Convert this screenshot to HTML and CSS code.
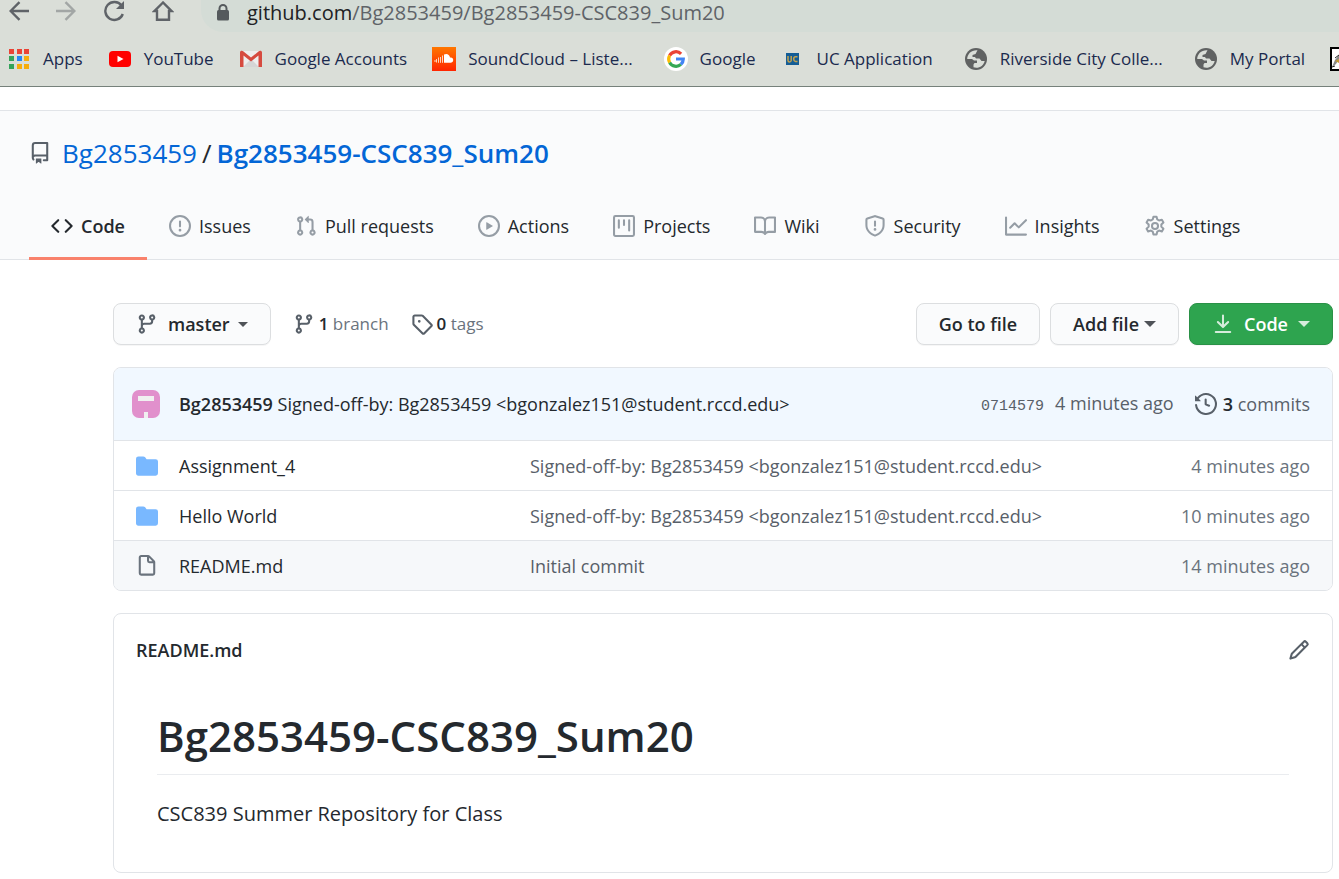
FILE: index.html
```html
<!DOCTYPE html>
<html lang="en">
<head>
<meta charset="utf-8">
<title>Bg2853459/Bg2853459-CSC839_Sum20</title>
<link rel="stylesheet" href="styles.css">
</head>
<body>
<svg class="defs" aria-hidden="true">
  <symbol id="branch" viewBox="0 0 16 16"><path fill-rule="evenodd" d="M11.75 2.5a.75.75 0 100 1.5.75.75 0 000-1.5zm-2.25.75a2.25 2.25 0 113 2.122V6A2.5 2.5 0 0110 8.500H6a1 1 0 00-1 1v1.128a2.251 2.251 0 11-1.500 0V5.372a2.250 2.250 0 111.500 0v1.836A2.492 2.492 0 016 7h4a1 1 0 001-1v-.628A2.250 2.250 0 019.500 3.250zM4.250 12a.75.75 0 100 1.500.75.75 0 000-1.500zM3.500 3.250a.75.75 0 111.500 0 .75.75 0 01-1.500 0z"/></symbol>
  <symbol id="folder" viewBox="0 0 16 16"><path d="M1.750 1A1.750 1.750 0 000 2.750v10.500C0 14.216.784 15 1.750 15h12.500A1.750 1.750 0 0016 13.250v-8.500A1.750 1.750 0 0014.250 3h-6.500a.25.25 0 01-.2-.1l-.9-1.200c-.33-.44-.85-.7-1.400-.7h-3.500z"/></symbol>
  <symbol id="globe" viewBox="0 0 22 22"><circle cx="11" cy="11" r="11"/><path fill="#dadeD8" d="M12.500 2.300C6.500 1.800 2.300 6 2.200 11H7l2 1.500h3V15H9.500l-1 1.500v2.800c5 1.700 10-1.300 11.200-6.300h-3.200L14.500 10.500H11L10 9H7.500V7l3-1z"/></symbol>
</svg>

<header class="chrome">
  <div class="toolbar">
    <button aria-label="Back"><svg width="20" height="20" viewBox="0 0 20 20"><path class="line" d="M20 10H2M10.500 1.200L1.600 10l8.900 8.800"/></svg></button>
    <button class="off" aria-label="Forward"><svg width="20" height="20" viewBox="0 0 20 20"><path class="line" d="M0 10h18M9.500 1.200l8.900 8.800-8.900 8.800"/></svg></button>
    <button aria-label="Reload"><svg width="22" height="22" viewBox="0 0 22 22"><path class="line" d="M18.500 5.500A9 9 0 1 0 19.800 14"/><path fill="#5f6368" d="M21 1v8h-8z"/></svg></button>
    <button aria-label="Home"><svg width="22" height="20" viewBox="0 0 22 20"><path class="line" d="M11 1.500L2.500 10H5v8.700h12V10h2.500z"/></svg></button>
    <div class="address">
      <svg width="14" height="17" viewBox="0 0 14 17"><path class="lockarc" d="M3.500 7V4.500a3.500 3.500 0 017 0V7"/><rect x="1" y="6" width="12" height="10.500" rx="1.500" fill="#555a5d"/></svg>
      <span class="url"><span class="host">github.com</span>/Bg2853459/Bg2853459-CSC839_Sum20</span>
    </div>
  </div>
  <nav class="bookmarks" aria-label="Bookmarks">
    <a href="#"><svg viewBox="0 0 24 24"><g fill="#ea4335"><path d="M2 2h5v5H2zM10 2h5v5h-5zM17 2h5v5h-5z"/></g><path fill="#34a35a" d="M2 9h5v5H2zM2 17h5v5H2z"/><path fill="#2486f5" d="M10 9h5v5h-5z"/><path fill="#f6ad0c" d="M17 9h5v5h-5zM10 17h5v5h-5zM17 17h5v5h-5z"/></svg>Apps</a>
    <a href="#"><svg viewBox="0 0 24 24"><rect x="1" y="4" width="22" height="16" rx="4" fill="red"/><path fill="#fff" d="M9.500 8.700v6.600l6-3.300z"/></svg>YouTube</a>
    <a href="#"><svg viewBox="0 0 24 24"><path fill="#eee" d="M2 4h20v16H2z"/><path fill="#d5d5d5" d="M4 20l8-8 8 8z"/><path fill="#d64b40" d="M1 20V5.500C1 3.500 3.500 3.500 4.500 4.600L12 10.500l7.500-5.900C20.500 3.500 23 3.500 23 5.500V20h-3.500V8.500L12 14.500 4.500 8.500V20z"/></svg>Google Accounts</a>
    <a href="#"><svg viewBox="0 0 24 24"><defs><linearGradient id="sc" x2="0" y2="1"><stop stop-color="#f70"/><stop offset="1" stop-color="#ff2500"/></linearGradient></defs><path fill="url(#sc)" d="M0 0h24v24H0z"/><path fill="#fff" d="M12 7.500c3-1.500 5.500.2 6 3 2-.5 3.200.8 3.200 2.500S20 15.800 18.500 15.800H12z"/><path stroke="#ffd4bd" d="M10.500 8.500v7.300M8.500 10v5.800M6.500 10.500v5.300M4.500 12v3.500M3 13v2"/></svg>SoundCloud – Liste...</a>
    <a href="#" class="wide"><svg viewBox="0 0 24 24"><circle cx="12" cy="12" r="12" fill="#fff"/><g fill="none" stroke-width="3.200"><path stroke="#ea4335" d="M5.600 8.500A7.300 7.300 0 0 1 17.100 6.800"/><path stroke="#fbbc05" d="M5.600 15.500a7.300 7.300 0 0 1 0-7"/><path stroke="#34a853" d="M5.600 15.500A7.300 7.300 0 0 0 16.900 17.400"/><path stroke="#4285f4" d="M12 12h7.300a7.300 7.300 0 0 1-2.400 5.400"/></g></svg>Google</a>
    <a href="#"><svg viewBox="0 0 24 24"><path fill="#145d96" d="M5 6h13v12H5z"/><path fill="none" stroke="#c5a34f" stroke-width="1.500" d="M7 9v4.500q0 1.500 1.500 1.500t1.700-1.500V9M16.500 9.800h-2q-1.800 0-1.800 2.200t1.800 2.500h2"/></svg>UC Application</a>
    <a href="#" class="wide"><svg viewBox="-1 -1 24 24" fill="#606262"><use href="#globe" width="22" height="22"/></svg>Riverside City Colle...</a>
    <a href="#" class="wide"><svg viewBox="-1 -1 24 24" fill="#606262"><use href="#globe" width="22" height="22"/></svg>My Portal</a>
    <a href="#" aria-label="Bookmark"><svg viewBox="0 0 24 24"><path fill="#fff" stroke="#000" stroke-width="2" d="M1 1h22v22H1z"/><path fill="#888" d="M2 20l3-7 4-5v4l-3 5z"/><path fill="#c49a36" d="M5 14l4-2v4z"/><path stroke="#222" d="M5 11l4-3M2 20l3-1"/></svg></a>
  </nav>
</header>

<div class="repo-head">
  <div class="title">
    <svg class="ic muted" viewBox="0 0 16 16"><path fill-rule="evenodd" d="M2 2.500A2.500 2.500 0 014.500 0h8.750a.75.75 0 01.75.75v12.500a.75.75 0 01-.75.75h-2.500a.75.75 0 110-1.500h1.750v-2h-8a1 1 0 00-.714 1.700.75.75 0 01-1.072 1.050A2.495 2.495 0 012 11.500v-9zm10.500-1V9h-8c-.356 0-.694.074-1 .208V2.500a1 1 0 011-1h8zM5 12.250v3.250a.25.25 0 00.4.2l1.450-1.087a.25.25 0 01.3 0L8.600 15.700a.25.25 0 00.4-.2v-3.250a.25.25 0 00-.25-.25h-3.500a.25.25 0 00-.25.25z"/></svg>
    <a href="#">Bg2853459</a><span class="slash">/</span><a href="#" class="name">Bg2853459-CSC839_Sum20</a>
  </div>
  <nav class="tabs" aria-label="Repository">
    <a href="#" class="on"><svg class="ic" viewBox="0 0 16 16"><path fill-rule="evenodd" d="M4.720 3.220a.75.75 0 011.060 1.060L2.060 8l3.720 3.720a.75.75 0 11-1.060 1.060L.47 8.530a.75.75 0 010-1.060l4.250-4.250zm6.560 0a.75.75 0 10-1.060 1.060L13.940 8l-3.720 3.720a.75.75 0 101.060 1.060l4.250-4.250a.75.75 0 000-1.060l-4.250-4.250z"/></svg>Code</a>
    <a href="#"><svg class="ic" viewBox="0 0 16 16"><path fill-rule="evenodd" d="M8 1.500a6.500 6.500 0 100 13 6.500 6.500 0 000-13zM0 8a8 8 0 1116 0A8 8 0 010 8zm9 3a1 1 0 11-2 0 1 1 0 012 0zm-.25-6.250a.75.75 0 00-1.500 0v3.500a.75.75 0 001.500 0v-3.500z"/></svg>Issues</a>
    <a href="#"><svg class="ic" viewBox="0 0 16 16"><path fill-rule="evenodd" d="M7.177 3.073L9.573.677A.25.25 0 0110 .854v4.792a.25.25 0 01-.427.177L7.177 3.427a.25.25 0 010-.354zM3.750 2.500a.75.75 0 100 1.500.75.75 0 000-1.500zm-2.250.75a2.250 2.250 0 113 2.122v5.256a2.251 2.251 0 11-1.500 0V5.372A2.250 2.250 0 011.500 3.250zM11 2.500h-1V4h1a1 1 0 011 1v5.628a2.251 2.251 0 101.500 0V5A2.500 2.500 0 0011 2.500zm1 10.250a.75.75 0 111.500 0 .75.75 0 01-1.500 0zM3.750 12a.75.75 0 100 1.500.75.75 0 000-1.500z"/></svg>Pull requests</a>
    <a href="#"><svg class="ic" viewBox="0 0 16 16"><path fill-rule="evenodd" d="M1.500 8a6.500 6.500 0 1113 0 6.500 6.500 0 01-13 0zM8 0a8 8 0 100 16A8 8 0 008 0zM6.379 5.227A.25.25 0 006 5.442v5.117a.25.25 0 00.379.214l4.264-2.559a.25.25 0 000-.428L6.379 5.227z"/></svg>Actions</a>
    <a href="#"><svg class="ic" viewBox="0 0 16 16"><path fill-rule="evenodd" d="M1.750 0A1.750 1.750 0 000 1.750v12.500C0 15.216.784 16 1.750 16h12.500A1.750 1.750 0 0016 14.250V1.750A1.750 1.750 0 0014.250 0H1.750zM1.500 1.750a.25.25 0 01.25-.25h12.500a.25.25 0 01.25.25v12.500a.25.25 0 01-.25.25H1.750a.25.25 0 01-.25-.25V1.750zM11.750 3a.75.75 0 00-.75.75v7.500a.75.75 0 001.500 0v-7.500a.75.75 0 00-.75-.75zm-8.250.75a.75.75 0 011.500 0v5.500a.75.75 0 01-1.500 0v-5.500zM8 3a.75.75 0 00-.75.75v3.500a.75.75 0 001.500 0v-3.500A.75.75 0 008 3z"/></svg>Projects</a>
    <a href="#"><svg class="ic" viewBox="0 0 16 16"><path fill-rule="evenodd" d="M0 1.750A.75.75 0 01.75 1h4.253c1.227 0 2.317.59 3 1.501A3.744 3.744 0 0111.006 1h4.245a.75.75 0 01.75.75v10.500a.75.75 0 01-.75.75h-4.507a2.250 2.250 0 00-1.591.659l-.622.621a.75.75 0 01-1.060 0l-.622-.621A2.250 2.250 0 005.258 13H.75a.75.75 0 01-.75-.75V1.750zm8.755 3a2.250 2.250 0 012.250-2.250H14.500v9h-3.757c-.71 0-1.400.201-1.992.572l.004-7.322zm-1.504 7.324l.004-5.073-.002-2.253A2.250 2.250 0 005.003 2.500H1.500v9h3.757a3.750 3.750 0 011.994.574z"/></svg>Wiki</a>
    <a href="#"><svg class="ic" viewBox="0 0 16 16"><path fill-rule="evenodd" d="M7.467.133a1.750 1.750 0 011.066 0l5.250 1.680A1.750 1.750 0 0115 3.480V7c0 1.566-.32 3.182-1.303 4.682-.983 1.498-2.585 2.813-5.032 3.855a1.700 1.700 0 01-1.330 0c-2.447-1.042-4.049-2.357-5.032-3.855C1.320 10.182 1 8.566 1 7V3.480a1.750 1.750 0 011.217-1.667l5.250-1.680zm.61 1.429a.25.25 0 00-.153 0l-5.250 1.680a.25.25 0 00-.174.238V7c0 1.358.275 2.666 1.057 3.860.784 1.194 2.121 2.340 4.366 3.297a.2.2 0 00.154 0c2.245-.956 3.582-2.104 4.366-3.298C13.225 9.666 13.500 8.360 13.500 7V3.480a.25.25 0 00-.174-.237l-5.250-1.680zM9 10.500a1 1 0 11-2 0 1 1 0 012 0zm-.25-5.750a.75.75 0 10-1.500 0v3a.75.75 0 001.500 0v-3z"/></svg>Security</a>
    <a href="#"><svg class="ic" viewBox="0 0 16 16"><path fill-rule="evenodd" d="M1.500 1.750a.75.75 0 00-1.500 0v12.500c0 .414.336.75.75.75h14.500a.75.75 0 000-1.500H1.500V1.750zm14.280 2.530a.75.75 0 00-1.060-1.060L10 7.940 7.530 5.470a.75.75 0 00-1.060 0L3.220 8.720a.75.75 0 001.060 1.060L7 7.060l2.470 2.470a.75.75 0 001.060 0l5.250-5.250z"/></svg>Insights</a>
    <a href="#"><svg class="ic" viewBox="0 0 24 24"><g fill="none" stroke="currentColor" stroke-width="2.200" stroke-linejoin="round"><circle cx="12" cy="12" r="3.300"/><path d="M10.300 1.800h3.400l.8 3.100 1.900 1.100 3.100-.9 1.700 3-2.300 2.200v2.400l2.300 2.300-1.700 2.900-3.100-.9-1.900 1.100-.8 3.100h-3.400l-.8-3.100L7.600 17l-3.100.9-1.700-2.900 2.300-2.300v-2.400L2.800 8.100l1.700-3 3.100.9 1.900-1.100z"/></g></svg>Settings</a>
  </nav>
</div>

<main class="content">
  <div class="actions">
    <button class="btn master"><svg class="ic muted" viewBox="0 0 16 16"><use href="#branch"/></svg>master<span class="caret"></span></button>
    <a href="#" class="stat"><svg class="ic muted" viewBox="0 0 16 16"><use href="#branch"/></svg><b>1</b> branch</a>
    <a href="#" class="stat"><svg class="ic muted" viewBox="0 0 16 16"><path fill-rule="evenodd" d="M2.500 7.775V2.750a.25.25 0 01.25-.25h5.025a.25.25 0 01.177.073l6.250 6.250a.25.25 0 010 .354l-5.025 5.025a.25.25 0 01-.354 0l-6.250-6.250a.25.25 0 01-.073-.177zm-1.500 0V2.750C1 1.784 1.784 1 2.750 1h5.025c.464 0 .91.184 1.238.513l6.250 6.250a1.750 1.750 0 010 2.474l-5.026 5.026a1.750 1.750 0 01-2.474 0l-6.250-6.250A1.750 1.750 0 011 7.775zM6 5a1 1 0 100 2 1 1 0 000-2z"/></svg><b>0</b> tags</a>
    <div class="right">
      <button class="btn">Go to file</button>
      <button class="btn add">Add file<span class="caret"></span></button>
      <button class="btn green"><svg class="ic" viewBox="0 0 16 16"><path fill-rule="evenodd" d="M7.470 10.780a.75.75 0 001.060 0l3.750-3.750a.75.75 0 00-1.060-1.060L8.750 8.440V1.750a.75.75 0 00-1.500 0v6.690L4.780 5.970a.75.75 0 00-1.060 1.060l3.750 3.750zM2.750 13a.75.75 0 000 1.500h10.500a.75.75 0 000-1.500H2.750z"/></svg>Code<span class="caret"></span></button>
    </div>
  </div>

  <section class="files">
    <div class="commit">
      <svg class="avatar" width="28" height="28" viewBox="0 0 28 28"><rect width="28" height="28" rx="7" fill="#e190cc"/><path fill="#f0f0f0" d="M6 6h16v5H6zM12 22h4v6h-4z"/></svg>
      <span><b>Bg2853459</b> <a href="#">Signed-off-by: Bg2853459 &lt;bgonzalez151@student.rccd.edu&gt;</a></span>
      <span class="meta"><span><a href="#" class="sha">0714579</a><a href="#">4 minutes ago</a></span><a href="#" class="history"><svg class="ic" viewBox="0 0 16 16"><path fill-rule="evenodd" d="M1.643 3.143L.427 1.927A.25.25 0 000 2.104V5.750c0 .138.112.25.25.25h3.646a.25.25 0 00.177-.427L2.715 4.215a6.500 6.500 0 11-1.180 4.458.75.75 0 10-1.493.154 8.001 8.001 0 101.600-5.684zM7.750 4a.75.75 0 01.75.75v2.992l2.028.812a.75.75 0 01-.557 1.392l-2.500-1A.75.75 0 017 8.250v-3.500A.75.75 0 017.750 4z"/></svg><span><b>3</b> commits</span></a></span>
    </div>
    <table>
      <colgroup><col class="c-icon"><col class="c-name"><col><col class="c-age"></colgroup>
      <tbody>
      <tr><td><svg class="ic folder" viewBox="0 0 16 16"><use href="#folder"/></svg></td><td><a href="#">Assignment_4</a></td><td class="msg">Signed-off-by: Bg2853459 &lt;bgonzalez151@student.rccd.edu&gt;</td><td class="age">4 minutes ago</td></tr>
      <tr><td><svg class="ic folder" viewBox="0 0 16 16"><use href="#folder"/></svg></td><td><a href="#">Hello World</a></td><td class="msg">Signed-off-by: Bg2853459 &lt;bgonzalez151@student.rccd.edu&gt;</td><td class="age">10 minutes ago</td></tr>
      <tr class="hover"><td><svg class="ic file" viewBox="0 0 16 16"><path fill-rule="evenodd" d="M3.750 1.500a.25.25 0 00-.25.25v11.500c0 .138.112.25.25.25h8.500a.25.25 0 00.25-.25V6H9.750A1.750 1.750 0 018 4.250V1.500H3.750zm5.750.56v2.190c0 .138.112.25.25.25h2.190L9.500 2.060zM2 1.750C2 .784 2.784 0 3.750 0h5.086c.464 0 .909.184 1.237.513l3.414 3.414c.329.328.513.773.513 1.237v8.086A1.750 1.750 0 0112.250 15h-8.500A1.750 1.750 0 012 13.250V1.750z"/></svg></td><td><a href="#">README.md</a></td><td class="msg">Initial commit</td><td class="age">14 minutes ago</td></tr>
      </tbody>
    </table>
  </section>

  <section class="readme">
    <div class="readme-head"><h2>README.md</h2><button class="edit" aria-label="Edit"><svg class="ic muted" viewBox="0 0 16 16"><path fill-rule="evenodd" d="M11.013 1.427a1.750 1.750 0 012.474 0l1.086 1.086a1.750 1.750 0 010 2.474l-8.610 8.610c-.21.21-.47.364-.756.445l-3.251.93a.75.75 0 01-.927-.928l.929-3.250a1.750 1.750 0 01.445-.758l8.610-8.610zm1.414 1.060a.25.25 0 00-.354 0L10.811 3.750l1.439 1.440 1.263-1.263a.25.25 0 000-.354l-1.086-1.086zM11.189 6.250L9.750 4.810l-6.286 6.287a.25.25 0 00-.064.108l-.558 1.953 1.953-.558a.249.249 0 00.108-.064l6.286-6.286z"/></svg></button></div>
    <article>
      <h1>Bg2853459-CSC839_Sum20</h1>
      <p>CSC839 Summer Repository for Class</p>
    </article>
  </section>
</main>
</body>
</html>
```
FILE: styles.css
```css
* { box-sizing: border-box; }
body {
  margin: 0;
  font: 18px/26px "Open Sans", "Noto Sans", sans-serif;
  color: #24292e;
  background: #fff;
  overflow-x: hidden;
}
a { color: inherit; text-decoration: none; }
b { font-weight: 600; }
button { font: inherit; color: inherit; border: 0; padding: 0; background: none; }
svg { display: block; flex: none; }
.defs { position: absolute; width: 0; height: 0; }
.ic { width: 22px; height: 22px; fill: currentColor; }
.muted { color: #586069; }

.chrome {
  background: #dadeD8;
  border-bottom: 1px solid #76817b;
}
.toolbar { display: flex; gap: 27px; padding-left: 9px; height: 32px; }
.toolbar button { height: 21px; display: flex; align-items: center; }
.off { opacity: .45; }
.line { fill: none; stroke: #5f6368; stroke-width: 2.4; }
.lockarc { fill: none; stroke: #555a5d; stroke-width: 2; }
.address {
  flex: 1;
  display: flex;
  align-items: center;
  gap: 17px;
  padding: 0 0 7px 15px;
  background: #d4dcd6;
  border-bottom-left-radius: 22px;
  white-space: nowrap;
}
.url { font-size: 20px; line-height: 24px; color: #5f6368; }
.host { color: #202124; }
.bookmarks {
  display: flex;
  height: 54px;
  align-items: center;
  gap: 25px;
  padding-left: 7px;
  white-space: nowrap;
  font-size: 17px;
  color: #1b2a4e;
}
.bookmarks a { display: flex; align-items: center; gap: 12px; flex: none; }
.bookmarks svg { width: 24px; height: 24px; }
.bookmarks .wide { margin-left: 6px; }

.repo-head {
  margin-top: 23px;
  background: #fafbfc;
  border-top: 1px solid #e1e4e8;
  border-bottom: 1px solid #e1e4e8;
}
.title {
  display: flex;
  align-items: center;
  padding: 22px 29px 0;
  font-size: 26px;
  line-height: 40px;
  color: #0366d6;
}
.title svg { margin-right: 11px; }
.slash { color: #24292e; padding: 0 5px; }
.name { font-weight: 600; }
.tabs { display: flex; padding: 22px 29px 0; white-space: nowrap; }
.tabs a {
  display: flex;
  align-items: center;
  gap: 8px;
  height: 65px;
  padding: 0 22px;
  margin-bottom: -1px;
  border-bottom: 3px solid transparent;
}
.tabs svg { color: #959da5; }
.tabs .on { font-weight: 600; border-color: #f9826c; }
.tabs .on svg { color: inherit; }

.content { padding: 43px 6px 6px 113px; }
.actions { display: flex; align-items: center; white-space: nowrap; }
.btn {
  display: flex;
  align-items: center;
  height: 42px;
  padding: 0 22px;
  font-weight: 600;
  background: #fafbfc;
  border: 1px solid #dcdee0;
  border-radius: 8px;
  box-shadow: 0 1px 0 #1b1f230a;
}
.caret {
  border: 5px solid transparent;
  border-top-color: currentColor;
  border-bottom-width: 0;
  margin-left: 10px;
  opacity: .8;
}
.master svg { margin-right: 10px; }
.master .caret { margin-left: 8px; }
.right .caret { border-width: 6px 6px 0; }
.add .caret { margin-left: 5px; }
.green { color: #fff; background: #2ea44f; border-color: #2a9147; }
.green svg { margin-right: 10px; opacity: .8; }
.stat { display: flex; align-items: center; color: #6a737d; margin-left: 22px; white-space: pre; font-size: 17px; }
.stat svg { margin-right: 4px; }
.stat b, .history b { color: #24292e; }
.right { display: flex; gap: 10px; margin-left: auto; }

.files, .readme { margin-top: 22px; border: 1px solid #e1e4e8; border-radius: 8px; }
.files { overflow: hidden; }
.commit {
  display: flex;
  align-items: center;
  height: 72px;
  padding: 0 22px 0 18px;
  background: #f1f8ff;
  white-space: nowrap;
}
.avatar { margin-right: 19px; }
.meta { display: flex; align-items: center; margin-left: auto; color: #586069; }
.sha { font: 15px/22px "Liberation Mono", monospace; margin-right: 11px; }
.history { display: flex; align-items: center; gap: 6px; margin-left: 21px; }
table { width: 100%; table-layout: fixed; border-spacing: 0; }
.c-icon { width: 65px; }
.c-name { width: 351px; }
.c-age { width: 190px; }
td { height: 50px; padding: 0; border-top: 1px solid #e1e4e8; white-space: nowrap; }
td svg { margin-left: 22px; }
.folder { color: #79b8ff; }
.file { color: #6a737d; }
.msg { color: #586069; }
.age { color: #6a737d; text-align: right; padding-right: 22px; }
.hover { background: #f6f8fa; }

.readme-head { display: flex; justify-content: space-between; align-items: center; padding: 23px 22px 0; }
.readme h2 { margin: 0; font-size: 18px; line-height: 26px; font-weight: 600; }
article { padding: 45px 43px 41px; }
h1 {
  margin: 0 0 22px;
  padding-bottom: 10px;
  border-bottom: 1px solid #eaecef;
  font-size: 42px;
  line-height: 56px;
  font-weight: 600;
}
article p { margin: 0; font-size: 20px; line-height: 34px; }
```
